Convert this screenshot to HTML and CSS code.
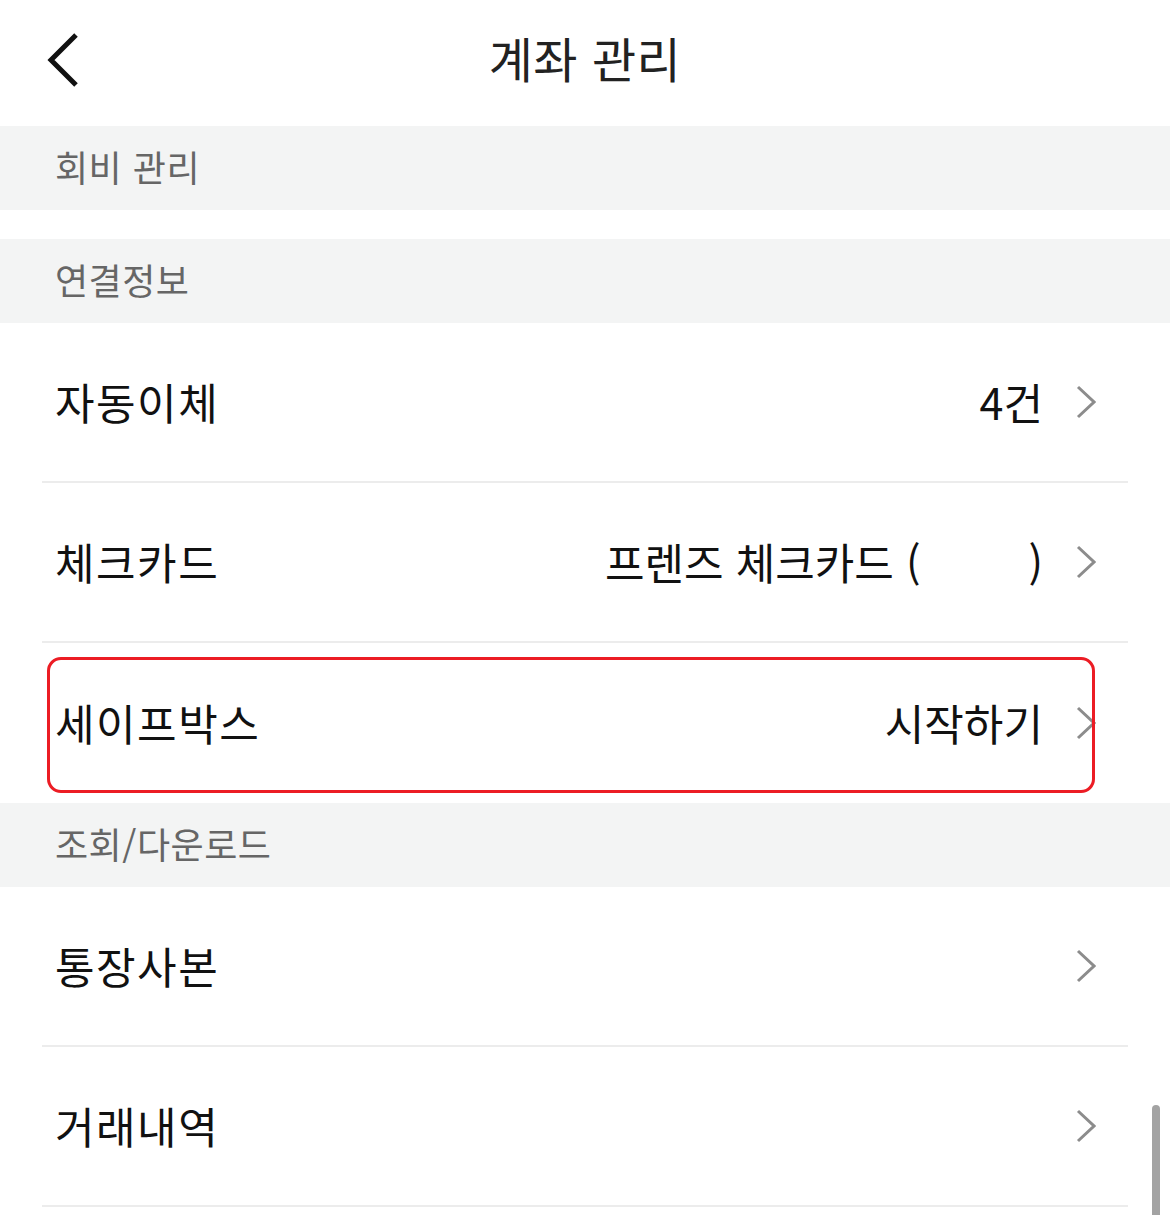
FILE: index.html
```html
<!DOCTYPE html>
<html lang="ko">
<head>
<meta charset="utf-8">
<title>계좌 관리</title>
<link rel="stylesheet" href="styles.css">
</head>
<body>
<div class="page">
  <header class="topbar">
    <div class="back">
      <svg width="36" height="56" viewBox="0 0 36 56"><path d="M31 3 L6 28 L31 53" fill="none" stroke="#111" stroke-width="5"/></svg>
    </div>
    <h1 class="title">계좌 관리</h1>
    <div></div>
  </header>

  <div class="section">회비 관리</div>
  <div class="gap"></div>
  <div class="section">연결정보</div>

  <div class="row">
    <span class="label">자동이체</span>
    <span class="value">4건</span>
    <svg class="chev" width="20" height="34" viewBox="0 0 20 34"><path d="M2 2 L18 17 L2 32" fill="none" stroke="#8c8c8c" stroke-width="3"/></svg>
  </div>
  <div class="row">
    <span class="label">체크카드</span>
    <span class="value">프렌즈 체크카드 (<span class="blank"></span>)</span>
    <svg class="chev" width="20" height="34" viewBox="0 0 20 34"><path d="M2 2 L18 17 L2 32" fill="none" stroke="#8c8c8c" stroke-width="3"/></svg>
  </div>
  <div class="row row-last highlight">
    <span class="label">세이프박스</span>
    <span class="value">시작하기</span>
    <svg class="chev" width="20" height="34" viewBox="0 0 20 34"><path d="M2 2 L18 17 L2 32" fill="none" stroke="#8c8c8c" stroke-width="3"/></svg>
    <div class="mark"></div>
  </div>

  <div class="section">조회/다운로드</div>

  <div class="row">
    <span class="label">통장사본</span>
    <span class="value"></span>
    <svg class="chev" width="20" height="34" viewBox="0 0 20 34"><path d="M2 2 L18 17 L2 32" fill="none" stroke="#8c8c8c" stroke-width="3"/></svg>
  </div>
  <div class="row">
    <span class="label">거래내역</span>
    <span class="value"></span>
    <svg class="chev" width="20" height="34" viewBox="0 0 20 34"><path d="M2 2 L18 17 L2 32" fill="none" stroke="#8c8c8c" stroke-width="3"/></svg>
  </div>

  <div class="scrollbar"></div>
</div>
</body>
</html>
```

FILE: styles.css
```css
html, body {
  margin: 0;
  padding: 0;
  background: #ffffff;
}
body {
  font-family: "Noto Sans CJK KR", "Noto Sans", sans-serif;
  color: #111;
}
.page {
  position: relative;
  width: 1170px;
  height: 1215px;
  overflow: hidden;
}
.topbar {
  height: 126px;
  display: grid;
  grid-template-columns: 1fr auto 1fr;
  align-items: center;
}
.back {
  padding-left: 45px;
  display: flex;
  align-items: center;
  margin-top: -6px;
}
.title {
  margin: 0;
  font-size: 48px;
  font-weight: 400;
  letter-spacing: 0.5px;
  color: #222;
  line-height: 1;
  margin-top: -12px;
}
.section {
  height: 84px;
  background: #f3f4f4;
  display: flex;
  align-items: center;
  padding-left: 55px;
  padding-bottom: 5px;
  box-sizing: border-box;
  font-size: 36px;
  letter-spacing: 0.5px;
  color: #666;
}
.gap {
  height: 29px;
}
.row {
  position: relative;
  height: 160px;
  margin: 0 42px;
  padding: 0 32px 0 13px;
  display: flex;
  align-items: center;
  border-bottom: 2px solid #ececec;
  box-sizing: border-box;
}
.row-last {
  border-bottom: none;
}
.label {
  font-size: 43px;
  letter-spacing: 1.5px;
  flex: 1;
  margin-top: -3px;
}
.value {
  font-size: 43px;
  margin-right: 33px;
  margin-top: -3px;
}
.blank {
  display: inline-block;
  width: 108px;
}
.chev {
  display: block;
}
.mark {
  position: absolute;
  left: 5px;
  top: 14px;
  width: 1048px;
  height: 136px;
  border: 3px solid #ec1c24;
  border-radius: 14px;
  box-sizing: border-box;
}
.scrollbar {
  position: absolute;
  left: 1152px;
  top: 1105px;
  width: 8px;
  height: 120px;
  border-radius: 4px;
  background: #a3a3a3;
}
```
